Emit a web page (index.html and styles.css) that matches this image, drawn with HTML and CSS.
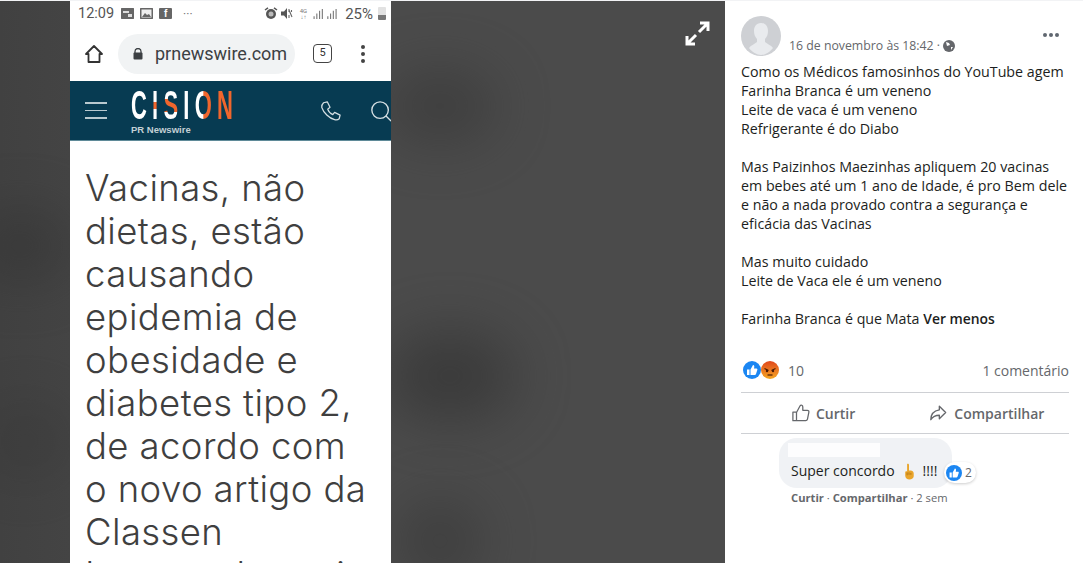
FILE: index.html
```html
<!DOCTYPE html>
<html lang="pt">
<head>
<meta charset="utf-8">
<title>Publicação</title>
<link rel="stylesheet" href="styles.css">
</head>
<body>
<div class="page">
  <main class="stage">
    <div class="blob blob-a"></div>
    <div class="blob blob-b"></div>
    <div class="blob blob-c"></div>
    <div class="blob blob-d"></div>
    <div class="blob blob-e"></div>
    <section class="phone">
      <div class="statusbar">
        <span class="clock">12:09</span>
        <svg class="mini" viewBox="0 0 13 11"><rect width="13" height="11" rx="1" fill="#666"/><rect x="2" y="3" width="6" height="2" fill="#ddd"/><rect x="7" y="6" width="4" height="3" fill="#ddd"/></svg>
        <svg class="mini" viewBox="0 0 13 11"><rect width="13" height="11" rx="1" fill="#666"/><rect x="1.500" y="1.500" width="10" height="8" fill="#eee"/><path d="M2 9l3-4 2 2 2-1 2 3z" fill="#666"/></svg>
        <span class="mini mini-f">f</span>
        <span class="more">···</span>
        <span class="status-right">
          <svg class="st-ic" viewBox="0 0 14 13"><circle cx="7" cy="7" r="5" fill="#555"/><circle cx="7" cy="7" r="2.500" fill="#bbb"/><path d="M1 3l3-2.200M13 3L10 .8" stroke="#555" stroke-width="1.500"/></svg>
          <svg class="st-ic st-mute" viewBox="0 0 12 13"><path d="M0 4.500h3l3-3.500v11L3 8.500H0z" fill="#555"/><path d="M8 3l3 7M8 2v3M10.500 3v2M8 8v3" stroke="#666" stroke-width="1.100"/></svg>
          <span class="net">4G<br>↓↑</span>
          <svg class="sig" viewBox="0 0 28 12"><path d="M1 12V9M4 12V6M7 12V3M10 12V1M16 12V9M19 12V6M22 12V3M25 12V1" stroke="#777" stroke-width="1.200"/></svg>
          <span class="pct">25%</span>
          <span class="battery"></span>
        </span>
      </div>
      <div class="urlbar">
        <svg class="home" viewBox="0 0 20 20"><path d="M10 2L2 10h2.500v8h11v-8H18z" fill="none" stroke="#333" stroke-width="1.800" stroke-linejoin="round"/></svg>
        <div class="omnibox">
          <svg class="lock" viewBox="0 0 10 12"><path d="M2 5V3.500a3 3 0 016 0V5" fill="none" stroke="#3c4043" stroke-width="1.300"/><rect x="0.500" y="4.500" width="9" height="7" rx="1" fill="#3c4043"/></svg>
          <span>prnewswire.com</span>
        </div>
        <span class="tabs">5</span>
        <span class="kebab"><i></i><i></i><i></i></span>
      </div>
      <header class="sitebar">
        <span class="burger"><i></i><i></i><i></i></span>
        <div class="logo">
          <div class="cision"><span>C</span><span class="l-band">I</span><span class="l-s">S</span><span>I</span><span class="l-o">O</span><span class="l-n">N</span></div>
          <div class="prn">PR Newswire</div>
        </div>
        <svg class="phone-ic" viewBox="0 0 24 24"><path d="M5 3l4-1 3 6-2.500 2c1 3 3 5 5.500 6l2-2.500 6 3-1 4c-1 1-3 1.500-5 1C11 20 5 14 3 8c-.5-2 1-4 2-5z" fill="none" stroke="#d5dfe3" stroke-width="1.400" stroke-linejoin="round"/></svg>
        <svg class="search-ic" viewBox="0 0 24 24"><circle cx="11" cy="11" r="9" fill="none" stroke="#d5dfe3" stroke-width="1.500"/><path d="M17.500 17.500L23 23" stroke="#d5dfe3" stroke-width="1.500"/></svg>
      </header>
      <h1 class="headline">Vacinas, não<br>dietas, estão<br>causando<br>epidemia de<br>obesidade e<br>diabetes tipo 2,<br>de acordo com<br>o novo artigo da<br>Classen<br>Immunotherapies</h1>
    </section>
    <svg class="expand" viewBox="0 0 25 25"><path d="M15 2h8v8M22.500 2.500L14 11M10 23H2v-8M2.500 22.500L11 14" fill="none" stroke="#fff" stroke-width="3"/></svg>
  </main>
  <aside class="panel">
    <div class="post-head">
      <svg class="avatar" viewBox="0 0 40 40"><circle cx="20" cy="20" r="20" fill="#ced0d4"/><path d="M20 7c-5 0-7 4-7 8 0 3 1 6 3 8v3c-2 2-6 3-8 6 3 4 8 7 12 7s9-3 12-7c-2-3-6-4-8-6v-3c2-2 3-5 3-8 0-4-2-8-7-8z" fill="#e9ebee"/></svg>
      <div class="meta"><span>16 de novembro às 18:42 ·</span>
        <svg class="globe" viewBox="0 0 12 12"><circle cx="6" cy="6" r="6" fill="#65676b"/><path d="M3 2l3 1 1 2-3 1zM8 7l2 0-2 3z" fill="#fff"/></svg>
      </div>
      <span class="dots"><i></i><i></i><i></i></span>
    </div>
    <div class="post-text">
      <p>Como os Médicos famosinhos do YouTube agem<br>Farinha Branca é um veneno<br>Leite de vaca é um veneno<br>Refrigerante é do Diabo</p>
      <p>Mas Paizinhos Maezinhas apliquem 20 vacinas<br>em bebes até um 1 ano de Idade, é pro Bem dele<br>e não a nada provado contra a segurança e<br>eficácia das Vacinas</p>
      <p>Mas muito cuidado<br>Leite de Vaca ele é um veneno</p>
      <p>Farinha Branca é que Mata <b>Ver menos</b></p>
    </div>
    <div class="stats">
      <svg class="react" viewBox="0 0 18 18"><circle cx="9" cy="9" r="9" fill="#1b86f2"/><path d="M4 8.500h2.500V14H4zM7.500 14V8.500L10 4c1.500 0 1.500 1.500 1 3.500h2.500c.8 0 1 .8.800 1.500L13 13c-.2.700-.6 1-1.300 1z" fill="#fff"/></svg>
      <svg class="react react-angry" viewBox="0 0 18 18"><defs><linearGradient id="ang" x1="0" y1="0" x2="0" y2="1"><stop offset="0" stop-color="#e0471c"/><stop offset="1" stop-color="#f5a623"/></linearGradient></defs><circle cx="9" cy="9" r="9" fill="url(#ang)"/><path d="M3.500 7.500l4 2M14.500 7.500l-4 2" stroke="#4a1a06" stroke-width="1.200"/><circle cx="6" cy="10" r="1.200" fill="#4a1a06"/><circle cx="12" cy="10" r="1.200" fill="#4a1a06"/><path d="M6.500 14h5" stroke="#4a1a06" stroke-width="1.200"/></svg>
      <span class="count">10</span>
      <span class="comments">1 comentário</span>
    </div>
    <div class="actions">
      <span class="action act-like">
        <svg class="act-ic" viewBox="0 0 20 20"><path d="M1 9h4v9.500H1zM5 9.500L9 2c1-1.500 3-.5 3 1.200V7h5c1.500 0 2 1 1.700 2.300l-1.500 7.500c-.3 1.200-1 1.700-2 1.700H5" fill="none" stroke="#65676b" stroke-width="1.400" stroke-linejoin="round"/></svg>Curtir</span>
      <span class="action act-share">
        <svg class="act-ic" viewBox="0 0 20 20"><path d="M11.500 2.500l7 7-7 7v-4c-4 0-7 1-9.500 5 0-6 3.500-10 9.500-11z" fill="none" stroke="#65676b" stroke-width="1.500" stroke-linejoin="round"/></svg>Compartilhar</span>
    </div>
    <div class="comment">
      <div class="bubble">
        <span class="redact"></span>
        <div class="c-text">Super concordo
          <svg class="emoji" viewBox="0 0 14 18"><path d="M5 1c1-.7 2 0 2 1v6c3 0 5 .5 5 3v3c0 2-2 3.500-4.500 3.500S3 16 3 13.500V10C3 9 4 8.500 5 9z" fill="#e9a52b"/><path d="M5 10v3M7 10v2.500M9 10.500v2" stroke="#a8690f" stroke-width=".8"/></svg>
          <span class="bang">!!!!</span></div>
        <span class="c-react">
          <svg viewBox="0 0 18 18"><circle cx="9" cy="9" r="9" fill="#1b86f2"/><path d="M4 8.500h2.500V14H4zM7.500 14V8.500L10 4c1.500 0 1.500 1.500 1 3.500h2.500c.8 0 1 .8.800 1.500L13 13c-.2.700-.6 1-1.300 1z" fill="#fff"/></svg>2</span>
      </div>
      <div class="c-links"><b>Curtir</b> · <b>Compartilhar</b> · 2 sem</div>
    </div>
  </aside>
</div>
</body>
</html>
```
FILE: styles.css
```css
* { box-sizing: border-box; }
html, body { margin: 0; padding: 0; height: 100%; overflow: hidden; background: #fff; }
.page { display: flex; width: 1083px; height: 563px; padding-top: 1px; background: #f2f3f5; }

.stage { position: relative; width: 725px; height: 562px; padding-left: 70px; background: linear-gradient(90deg, #414141 0, #444 70px, #4b4b4b 120px); overflow: hidden; }
.blob { position: absolute; border-radius: 50%; background: #2f2f2f; filter: blur(28px); }
.blob-a { left: 385px; top: 70px; width: 110px; height: 70px; opacity: .5; }
.blob-b { left: 385px; top: 330px; width: 130px; height: 90px; opacity: .6; }
.blob-c { left: 400px; top: 500px; width: 80px; height: 80px; opacity: .5; }
.blob-d { left: -30px; top: 210px; width: 100px; height: 70px; opacity: .5; }
.blob-e { left: -20px; top: 400px; width: 90px; height: 80px; opacity: .3; }

.phone { position: relative; z-index: 1; width: 321px; height: 562px; background: #fff; overflow: hidden; font-family: "Roboto", sans-serif; }

.statusbar { display: flex; align-items: center; height: 25px; padding: 0 5px 0 8px; color: #555; background: #fff; }
.clock { font-size: 14.500px; margin-right: 7px; }
.mini { display: block; width: 13px; height: 11px; margin-right: 6px; background: #666; border-radius: 1px; }
.mini-f { color: #fff; font: bold 10px/11px "Liberation Sans", sans-serif; text-align: center; }
.more { margin-left: 5px; font-size: 12px; color: #777; }
.status-right { display: flex; align-items: center; margin-left: auto; }
.st-ic { width: 14px; height: 13px; margin-right: 3px; }
.st-mute { width: 12px; }
.net { font-size: 6px; line-height: 6px; color: #777; margin: 0 5px 0 4px; text-align: center; }
.sig { width: 28px; height: 11px; }
.pct { font-size: 15px; margin: 0 5px 0 5px; }
.battery { width: 8px; height: 13px; background: linear-gradient(#e2e2e2 65%, #777 65%); border-radius: 1px; }

.urlbar { display: flex; align-items: center; height: 55px; padding-left: 14px; }
.home { width: 20px; height: 20px; margin-right: 14px; flex: none; }
.omnibox { display: flex; align-items: center; width: 177px; height: 40px; padding-left: 15px; border-radius: 20px; background: #f1f3f4; color: #3c4043; font-size: 18px; overflow: hidden; white-space: nowrap; flex: none; }
.lock { width: 10px; height: 12px; margin-right: 12px; flex: none; }
.tabs { width: 19px; height: 19px; margin-left: 18px; border: 1.500px solid #444; border-radius: 4px; font-size: 11px; line-height: 16px; text-align: center; color: #333; flex: none; }
.kebab { display: flex; flex-direction: column; gap: 3px; margin-left: 29px; }
.kebab i { width: 4px; height: 4px; border-radius: 50%; background: #444; }

.sitebar { display: flex; align-items: center; height: 60px; padding-left: 15px; background: #073b52; border-bottom: 1px solid #5f8a98; }
.burger { display: flex; flex-direction: column; gap: 6px; width: 22px; flex: none; }
.burger i { height: 1.500px; background: #b9c9cf; }
.logo { align-self: flex-start; margin: 9px 0 0 24px; width: 190px; flex: none; color: #fff; }
.cision { font: bold 40px/31px "Liberation Sans", sans-serif; transform: scaleX(.55); transform-origin: left; white-space: nowrap; }
.cision span { display: inline-block; margin-right: 9.500px; color: #fff; }
.cision .l-band { background: linear-gradient(#fff 38%, #f0662d 38%, #f0662d 62%, #fff 62%); -webkit-background-clip: text; background-clip: text; color: transparent; }
.cision .l-s { background: linear-gradient(#fff 30%, #f0662d 30%, #f0662d 72%, #fff 72%); -webkit-background-clip: text; background-clip: text; color: transparent; }
.cision .l-o { background: linear-gradient(90deg, #fff 50%, #f0662d 50%); -webkit-background-clip: text; background-clip: text; color: transparent; }
.cision .l-n { color: #f0662d; margin-right: 0; }
.prn { margin-top: 4px; font: bold 9.500px/10px "Liberation Sans", sans-serif; color: #c3d0d5; }
.phone-ic { width: 22px; height: 22px; margin-left: -2px; flex: none; }
.search-ic { width: 22px; height: 22px; margin-left: 29px; flex: none; }

.headline { margin: 0; padding: 26px 0 0 15px; font: 350 36.500px/43px "Inter", sans-serif; letter-spacing: .4px; color: #3f3f3f; white-space: nowrap; }

.expand { position: absolute; left: 685px; top: 20px; width: 25px; height: 25px; }

.panel { width: 358px; height: 562px; padding: 0 14px 0 16px; background: #fff; font-family: "Open Sans", sans-serif; color: #1c1e21; }

.post-head { display: flex; align-items: center; height: 54px; padding-top: 16px; }
.avatar { width: 40px; height: 40px; flex: none; }
.meta { display: flex; align-items: center; gap: 3px; margin: 19px 0 0 8px; font-size: 12.300px; color: #65676b; }
.globe { width: 12px; height: 12px; }
.dots { display: flex; gap: 2px; margin-left: auto; margin: 0 10px 2px auto; }
.dots i { width: 4px; height: 4px; border-radius: 50%; background: #606770; }

.post-text { margin-top: 7px; font-size: 14.250px; line-height: 19px; white-space: nowrap; }
.post-text p { margin: 0 0 19px; }
.post-text b { font-weight: 600; font-size: 13.900px; }

.stats { display: flex; align-items: center; height: 20px; margin-top: 32px; padding-left: 2px; }
.react { width: 18px; height: 18px; }
.count { margin-left: 9px; font-size: 14px; color: #65676b; }
.comments { margin-left: auto; font-size: 14px; color: #65676b; }

.actions { display: flex; height: 42px; margin-top: 12px; border-top: 1px solid #ced0d4; border-bottom: 1px solid #ced0d4; font-size: 14px; font-weight: 600; color: #65676b; }
.action { display: flex; align-items: center; gap: 6px; }
.act-like { margin-left: 51px; }
.act-share { margin-left: 74px; gap: 7px; }
.act-ic { width: 18px; height: 18px; }

.comment { margin: 4px 0 0 38px; }
.bubble { position: relative; display: block; width: 173px; height: 50px; padding: 23px 12px 0; border-radius: 18px; background: #f0f2f5; font-size: 14px; line-height: 20px; }
.redact { position: absolute; left: 9px; top: 5px; width: 92px; height: 14px; background: #fff; opacity: .85; }
.c-text { display: flex; align-items: center; gap: 7px; white-space: nowrap; }
.emoji { width: 14px; height: 17px; }
.c-react { position: absolute; left: 165px; top: 24px; display: flex; align-items: center; gap: 3px; height: 21px; padding: 0 4px 0 2px; border-radius: 11px; background: #fff; box-shadow: 0 1px 3px rgba(0,0,0,.2); font-size: 12px; color: #65676b; }
.c-react svg { width: 16px; height: 16px; }
.c-links { margin: 2px 0 0 12px; font-size: 11.200px; line-height: 16px; color: #65676b; }
.c-links b { font-weight: 700; }
```
